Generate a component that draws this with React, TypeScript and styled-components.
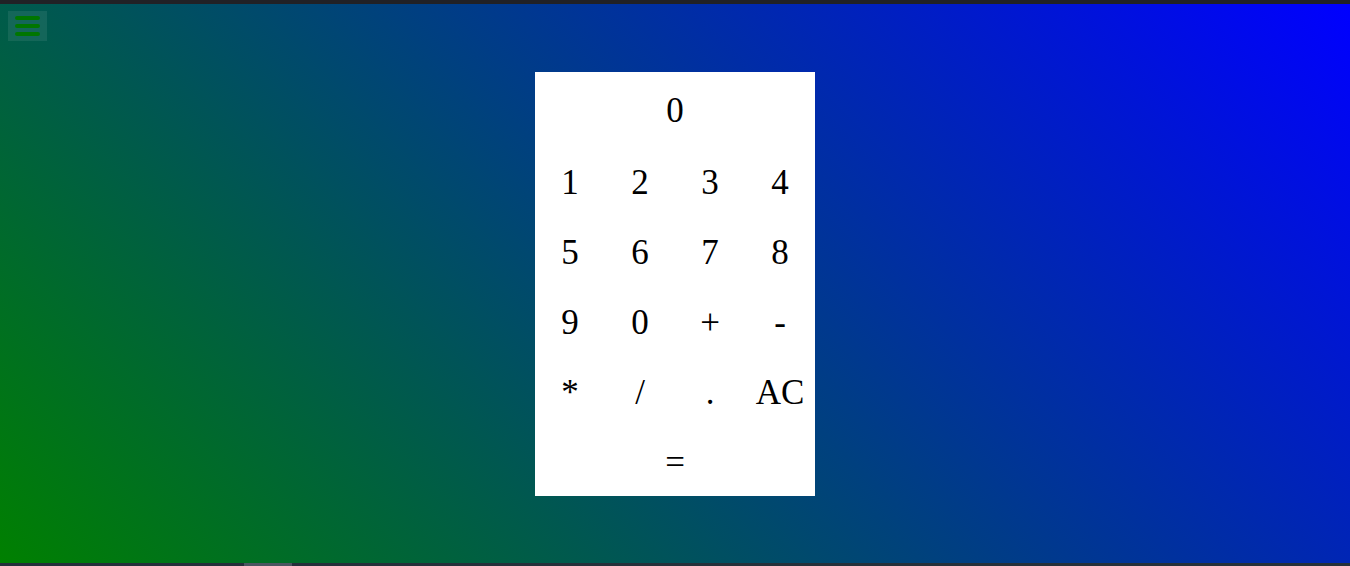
import React from "react";
import styled, { createGlobalStyle } from "styled-components";

const Global = createGlobalStyle`
  html, body { margin: 0; padding: 0; height: 100%; overflow: hidden; }
  #root { height: 566px; }
`;

const Page = styled.div`
  height: 566px;
  display: flex;
  flex-direction: column;
  font-family: "Liberation Serif", "Times New Roman", serif;
`;

const TopBar = styled.div`
  height: 4px;
  flex: none;
  background: #212126;
`;

const BottomBar = styled.div`
  height: 3px;
  flex: none;
  background: #25303a;
  display: flex;
`;

const Thumb = styled.div`
  margin-left: 244px;
  width: 48px;
  background: #4b5660;
`;

const Stage = styled.main`
  flex: 1;
  display: flex;
  flex-direction: column;
  background: linear-gradient(45deg, #008000, #0000ff);
`;

const MenuButton = styled.button`
  margin: 7px 0 0 8px;
  width: 39px;
  height: 30px;
  padding: 0;
  border: none;
  background: rgba(255, 255, 255, 0.08);
  display: flex;
  flex-direction: column;
  align-items: center;
  justify-content: center;
  gap: 4px;
  align-self: flex-start;
`;

const MenuLine = styled.span`
  display: block;
  width: 25px;
  height: 4px;
  border-radius: 2px;
  background: #007600;
`;

const Calculator = styled.section`
  align-self: center;
  margin-top: 31px;
  width: 280px;
  background: #ffffff;
  display: flex;
  flex-direction: column;
`;

const Display = styled.div`
  height: 74px;
  padding-top: 4px;
  box-sizing: border-box;
  display: flex;
  align-items: center;
  justify-content: center;
  font-size: 35px;
  color: #000;
`;

const Keys = styled.div`
  display: grid;
  grid-template-columns: repeat(4, 70px);
  grid-auto-rows: 70px;
`;

const Key = styled.button<{ $wide?: boolean }>`
  grid-column: ${(p) => (p.$wide ? "1 / -1" : "auto")};
  border: none;
  background: transparent;
  padding: 3px 0 0;
  font-family: inherit;
  font-size: 35px;
  color: #000;
  display: flex;
  align-items: center;
  justify-content: center;
  cursor: pointer;
`;

const keys = ["1", "2", "3", "4", "5", "6", "7", "8", "9", "0", "+", "-", "*", "/", ".", "AC"];

export default function App() {
  return (
    <>
      <Global />
      <Page>
        <TopBar />
        <Stage>
          <MenuButton aria-label="menu">
            <MenuLine />
            <MenuLine />
            <MenuLine />
          </MenuButton>
          <Calculator>
            <Display>0</Display>
            <Keys>
              {keys.map((k) => (
                <Key key={k}>{k}</Key>
              ))}
              <Key $wide>=</Key>
            </Keys>
          </Calculator>
        </Stage>
        <BottomBar>
          <Thumb />
        </BottomBar>
      </Page>
    </>
  );
}
